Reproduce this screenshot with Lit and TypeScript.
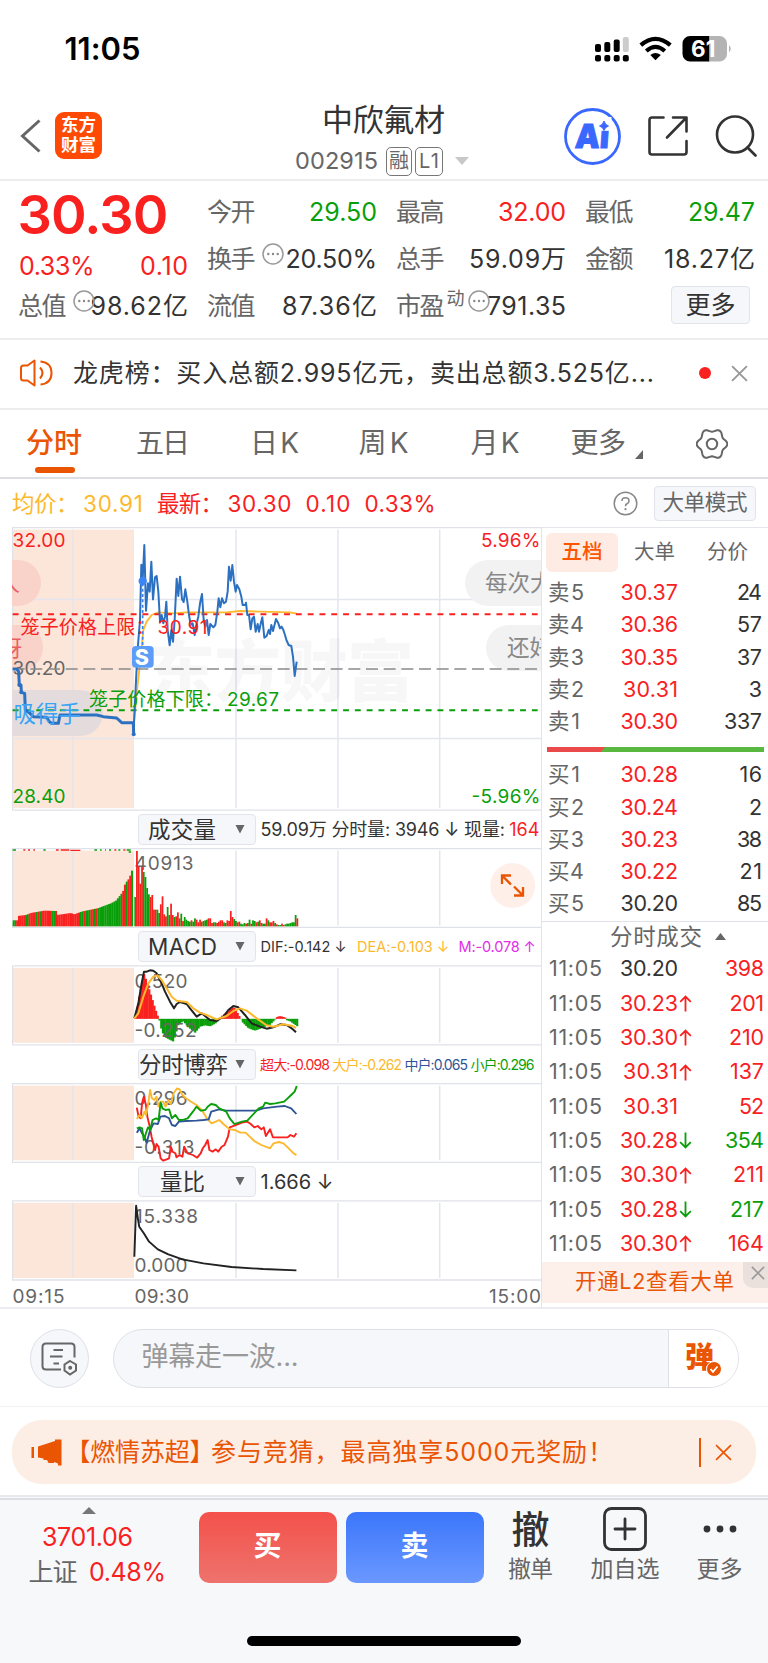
import { LitElement, html, svg, css } from "lit";
import { customElement, property } from "lit/decorators.js";

const RED = "#f8211f";
const GREEN = "#0a9f0a";
const ORANGE = "#ea5504";
const YELLOW = "#fdb92e";
const LINE = "#e4e6ed";

/** A run of text whose tracking is adjusted so that it spans exactly `w` pixels. */
@customElement("fit-text")
class FitText extends LitElement {
  @property({ type: Number }) w = 0;
  static styles = css`
    :host { display: inline-block; white-space: pre; line-height: 1.2; flex: none; }
    .t { display: inline-block; white-space: pre; }
  `;
  render() {
    return html`<span class="t"><slot></slot></span>`;
  }
  firstUpdated() {
    const span = this.renderRoot.querySelector(".t") as HTMLElement;
    const n = Array.from((this.textContent || "").trim()).length;
    const natural = span.getBoundingClientRect().width;
    if (this.w && n > 1) {
      const ls = (this.w - natural) / (n - 1);
      span.style.letterSpacing = ls + "px";
      span.style.marginRight = -ls + "px";
    }
  }
}

const ft = (text: string, w: number, cls = "") => html`<fit-text class=${cls} w=${w}>${text}</fit-text>`;

/** Chart label in page coordinates. */
const label = (x: number, y: number, w: number, text: string, fill = "#666", size = 19) =>
  svg`<text x=${x} y=${y} textLength=${w} font-size=${size} fill=${fill}>${text}</text>`;

const lerp = (pts: number[][], x: number) => {
  for (let i = 1; i < pts.length; i++) {
    if (x <= pts[i][0]) {
      const [a, b] = [pts[i - 1], pts[i]];
      return a[1] + ((b[1] - a[1]) * (x - a[0])) / (b[0] - a[0] || 1);
    }
  }
  return pts[pts.length - 1][1];
};

const AUCTION = "38,447 50,447 56,455 58,495 63,495 64,517 74,520 76,570 90,580 100,590 140,592 148,605 155,610 175,610 180,585 290,585 310,590 350,594 365,608 400,608 401,643";
const PRICE =
  "401,643 402,608 412,400 420,300 424,134 428,180 433,75 438,272 444,190 449,215 454,125 459,238 465,172 470,168 475,215 480,305 485,285 490,310 495,290 499,245 503,330 509,376 514,330 519,365 524,300 530,176 535,228 540,170 546,238 551,246 556,208 562,245 567,285 572,315 578,310 584,345 590,310 595,290 600,250 606,222 611,300 616,320 621,300 626,345 631,312 640,322 646,315 652,275 656,235 661,262 666,235 672,250 678,245 683,215 687,140 692,182 697,135 702,185 707,215 711,195 718,208 724,230 728,255 736,255 738,248 742,285 747,285 752,328 757,295 762,290 767,335 773,312 777,335 782,312 787,292 793,353 800,348 806,330 810,342 814,315 819,333 828,297 835,310 840,325 845,320 850,330 855,345 860,362 866,375 874,378 879,410 884,468 890,425";
const AVERAGE = "402,608 410,520 420,430 430,330 440,305 455,285 475,277 520,280 560,277 680,277 720,273 780,275 870,277 890,281";

const AUCTION_VOL = [[38, 361], [49, 361], [50, 348], [75, 345], [90, 339], [130, 332], [167, 333], [169, 345], [210, 339], [220, 343], [245, 334], [290, 325], [330, 310], [345, 302], [357, 287], [366, 275], [373, 250], [385, 235], [391, 218], [398, 198]];
const AUCTION_COL = "ggrrrrrggrrrrgrgrrrrrrggrrrrrrrrrrrrrrggrgggrrgrggggggggggggggrrgrrgggg";
const VOL = [88, 226, 180, 128, 178, 163, 148, 115, 96, 88, 94, 50, 50, 50, 40, 66, 90, 36, 30, 58, 34, 68, 34, 28, 30, 42, 24, 38, 16, 28, 20, 16, 14, 18, 14, 24, 20, 12, 20, 14, 16, 18, 20, 24, 24, 10, 12, 12, 10, 14, 18, 18, 12, 10, 18, 16, 46, 28, 22, 16, 12, 14, 8, 6, 10, 8, 10, 20, 8, 18, 16, 12, 14, 18, 10, 8, 8, 24, 18, 12, 12, 16, 10, 6, 4, 4, 8, 4, 6, 8, 8, 10, 12, 12, 34, 24];
const VOL_COL = "grrrrggggrrrrggrrrrggrrgrrrgrggggrggrrrgrggrrrggrrrrggrrrrggrrgggrggrggrgrrggrgrrrgrggrrgggggggr";

const HIST = [[404, 656], [410, 630], [420, 570], [432, 522], [440, 545], [455, 592], [465, 625], [476, 656], [478, 662], [485, 695], [495, 712], [520, 725], [526, 705], [535, 672], [550, 664], [562, 680], [585, 698], [600, 680], [615, 676], [630, 679], [650, 668], [655, 656], [665, 648], [685, 632], [700, 620], [712, 638], [722, 656], [728, 668], [745, 685], [765, 692], [790, 682], [810, 674], [824, 660], [828, 652], [838, 648], [855, 652], [858, 660], [870, 664], [893, 680]];
const DIF = "403,655 415,610 425,550 432,515 440,515 450,511 460,512 470,520 485,550 495,575 510,605 522,625 530,612 540,606 560,612 570,625 590,650 605,640 630,660 650,663 670,650 685,630 700,618 715,622 735,645 755,670 780,680 800,686 820,682 840,673 860,675 875,685 888,697";
const DEA = "403,655 415,640 430,590 445,550 460,530 472,526 485,540 500,565 515,590 530,602 560,606 580,625 600,638 620,645 650,658 680,648 700,633 720,625 740,632 770,655 800,676 820,680 850,673 875,677 888,684";

const GAME: [string, string][] = [
  ["#f8211f", "390,203 395,230 401,235 405,190 410,170 416,195 420,230 427,260 432,290 437,310 442,330 446,312 452,320 458,355 465,362 475,358 482,355 487,320 492,335 500,340 503,352 512,345 520,350 525,320 535,340 550,345 562,353 572,340 578,325 585,315 592,300 597,330 606,335 615,328 622,335 632,320 640,315 650,290 655,262 670,256 690,248 705,245 715,252 725,262 735,258 745,268 752,262 758,288 770,268 778,292 820,292 828,285 838,290 845,280"],
  [YELLOW, "390,237 398,225 404,235 412,215 416,225 422,195 428,150 433,175 440,180 446,170 452,200 458,185 465,185 472,200 480,180 487,192 495,160 505,145 512,148 520,165 530,175 545,185 560,195 575,210 590,235 603,250 615,245 625,240 640,255 655,268 670,270 685,278 700,278 712,290 725,303 745,315 770,325 780,310 795,306 808,310 820,322 835,338 845,346"],
  ["#2f5597", "390,278 398,265 405,280 412,292 418,308 428,270 438,250 450,252 457,230 470,228 482,235 490,255 500,258 510,245 530,243 560,242 580,240 595,238 602,215 625,208 645,212 730,212 750,205 790,200 812,198 830,205 845,222"],
  [GREEN, "390,265 398,262 405,265 410,300 416,280 422,262 428,270 435,240 445,235 452,240 458,188 463,205 472,210 482,208 490,235 500,225 510,240 520,240 535,235 550,215 560,200 572,212 585,210 592,200 602,192 615,195 625,205 645,215 655,235 668,252 690,245 705,242 720,225 738,205 750,200 756,188 770,192 785,190 810,185 820,175 830,165 840,155 846,138"],
];

const gearPath = () => {
  let d = "";
  for (let a = 0; a < 360; a += 5) {
    const r = 13.8 + 1.5 * Math.cos((6 * a * Math.PI) / 180);
    const t = (a * Math.PI) / 180;
    d += (a ? "L" : "M") + (16 + r * Math.cos(t)).toFixed(2) + " " + (16 + r * Math.sin(t)).toFixed(2);
  }
  return d + "Z";
};

/** Shaded auction area, frame and vertical grid of one chart, in page coordinates. */
const frame = (top: number, bottom: number) => svg`
  <rect x="12" y=${top + 2.6} width="122" height=${bottom - top - 4.6} fill="#fce6da"/>
  <path d=${`M12 ${top + 0.7}H541M12 ${bottom}H541M12.5 ${top}V${bottom}`} stroke="#dfe2e9" stroke-width="1.3" fill="none"/>
  <path d=${[73, 236, 338, 439.7].map((x) => `M${x} ${top + 2.5}V${bottom - 2}`).join("")} stroke=${LINE} stroke-width="1.5" fill="none"/>`;

@customElement("app-root")
class AppRoot extends LitElement {
  static styles = css`
    :host { display: block; width: 768px; height: 1663px; overflow: hidden; background: #fff; color: #333;
      font-family: Inter, "Noto Sans CJK SC", sans-serif; font-size: 25px; line-height: 1.2; }
    * { box-sizing: border-box; }
    svg { display: block; flex: none; }
    svg text { white-space: pre; }
    .red { color: #f8211f; } .green { color: #0a9f0a; } .grey { color: #666; } .dark { color: #333; }
    .orange { color: #ea5504; } .yellow { color: #fdb92e; } .magenta { color: #e22ce8; } .blue { color: #2f5597; }
    .status { height: 98px; display: flex; justify-content: space-between; padding: 0 35px 0 64.5px; align-items: center; }
    .clock { font-size: 31px; font-weight: 600; color: #000; }
    .nav { height: 83px; display: grid; grid-template-columns: 295px 1fr 209px; border-bottom: 2px solid #ededed; }
    .nav-left { display: flex; align-items: center; gap: 14px; padding: 0 0 6px 20px; }
    .logo { width: 47px; height: 47px; border-radius: 9px; background: #ff4a05; color: #fff; font-size: 17.5px; font-weight: 700;
      line-height: 20px; text-align: center; padding-top: 3px; }
    .nav-mid { display: flex; flex-direction: column; }
    .name { padding-left: 27px; font-size: 31px; height: 45px; padding-top: 3px; }
    .code { display: flex; align-items: center; height: 36px; font-size: 23.5px; color: #666; }
    .badge { border: 1.5px solid #777; border-radius: 5px; height: 29px; font-size: 20px; display: flex; align-items: center; justify-content: center; }
    .b1 { width: 26px; margin-left: 8px; } .b2 { width: 28px; margin-left: 3px; }
    .caret { margin-left: 12px; }
    .nav-right { display: flex; align-items: center; padding: 0 0 5px 5px; gap: 27px; }
    .quote { height: 159px; border-bottom: 2px solid #ededed; display: grid; grid-template-columns: 169px 169px 169px 169px;
      column-gap: 20px; padding: 7.6px 12px 0 19px; }
    .col { display: flex; flex-direction: column; }
    .cell { height: 47px; display: flex; align-items: center; justify-content: space-between; position: relative; }
    .lbl { display: flex; align-items: center; color: #666; margin-left: -1px; }
    .price { font-size: 54px; font-weight: 600; height: 54px; line-height: 54px; display: flex; align-items: center; margin-left: -1.5px; }
    .chg { height: 40px; display: flex; justify-content: space-between; align-items: center; padding-top: 7px; }
    .dots { position: absolute; top: 7.5px; left: 54px; }
    .pe .dots { left: 70.5px; }
    .sup { font-size: 18px; line-height: 22px; margin: -15px 0 0 2px; }
    .more { margin-left: auto; width: 79px; height: 38px; border: 1.5px solid #e1e4ea; border-radius: 4px; background: #f6f7fa;
      display: flex; align-items: center; justify-content: center; margin: -2px 5px 0 auto; padding-bottom: 1px; }
    .notice { height: 70px; border-bottom: 2px solid #ededed; display: flex; align-items: center; padding-left: 20px; padding-bottom: 2px; }
    .notice fit-text { margin-left: 20px; width: 600px; }
    .notice .x { margin-left: 20px; }
    .dot { width: 12px; height: 12px; border-radius: 50%; background: #f8211f; margin-left: 26px; }
    .tabs { height: 69px; border-bottom: 2px solid #dcdee3; display: flex; font-size: 28px; color: #666; align-items: center; padding-left: 26px; }
    .tab { display: flex; align-items: center; height: 67px; position: relative; padding-top: 1px; }
    .tab.on { color: #ea5504; font-weight: 500; }
    .tab.on::after { content: ""; position: absolute; left: 9px; bottom: 4px; width: 40px; height: 6px; border-radius: 3px; background: #ea5504; }
    .t2 { margin-left: 54px; } .t3 { margin-left: 60px; } .t4 { margin-left: 59.5px; } .t5 { margin-left: 62px; } .t6 { margin-left: 51px; } .t7 { margin-left: 53px; }
    .tri { align-self: flex-end; margin: 0 0 18px 9px; }
    .bar { height: 48px; display: flex; align-items: center; padding: 0 12px; font-size: 22.5px; }
    .bar .gap { flex: 1; } .bar .s { width: 4.5px; } .bar .m { width: 14px; }
    .mode { margin-left: 16px; width: 102px; height: 35px; border: 1.5px solid #e1e4ea; border-radius: 4px; background: #f6f7fa;
      color: #666; font-size: 21.5px; display: flex; align-items: center; justify-content: center; }
    .main { height: 782px; display: grid; grid-template-columns: 530px 1fr; padding-left: 12px; border-bottom: 2px solid #ececf0; }
    .charts { border-right: 1.5px solid #e1e4ea; display: flex; flex-direction: column; }
    .head { display: flex; align-items: center; padding-left: 126px; }
    .sel { width: 118px; height: 31px; border: 1.5px solid #e1e4ea; border-radius: 4px; background: #f6f7fa; display: flex;
      align-items: center; justify-content: space-between; padding: 0 10px 0 9px; font-size: 22.5px; margin-right: 5px; }
    .sel.c { padding-left: 21px; } .sel.w { padding-left: 0; }
    .h1 { height: 37px; font-size: 18px; } .h2 { height: 37px; font-size: 14.5px; } .h3 { height: 37px; font-size: 14px; gap: 3px; } .h4 { height: 37px; font-size: 20px; }
    .head > fit-text { margin-left: -0.5px; padding-top: 1px; }
    .h2 > .yellow { margin-left: 10.5px; } .h2 > .magenta { margin-left: 9.5px; } .h3 .sel { margin-right: 1.5px; }
    .axis { display: flex; color: #666; font-size: 19px; height: 27px; align-items: center; padding: 6px 0 0 0.5px; justify-content: space-between; }
    .axis .mid { margin-right: 230px; }
    .side { display: flex; flex-direction: column; font-size: 21.5px; border-top: 1px solid #e4e6ec; }
    .stabs { margin-top: 5px; height: 39px; display: flex; padding-left: 4px; font-size: 20.5px; color: #666; }
    .stab { width: 73px; display: flex; align-items: center; justify-content: center; border-radius: 6px; }
    .stab.on { background: #feece4; color: #ff5500; font-weight: 500; width: 72px; }
    .rows { padding-top: 5px; }
    .row { height: 32.25px; display: grid; grid-template-columns: 38px 92px 84px; align-items: center; margin-left: 6px; }
    .row .p, .row .v { text-align: right; }
    .ratio { height: 5px; margin: 9px 5px 7px; display: flex; background: #58b840; }
    .ratio svg { height: 5px; }
    .tick-head { border-top: 1.5px solid #dfe2e9; height: 31.5px; display: flex; align-items: center; color: #666; font-size: 22.5px; gap: 13px; padding-left: 68px; }
    .tick { height: 34.35px; display: grid; grid-template-columns: 55px 74px 16px 75px; align-items: center; margin-left: 7px; }
    .tick .p { text-align: right; } .tick .v { text-align: right; padding-right: 5px; }
    .arrow { margin-left: 1px; }
    .l2 { height: 41px; background: #fdf0ea; color: #ea5504; display: flex; align-items: center; padding-left: 33px; font-size: 21.5px; position: relative; padding-bottom: 2px; margin-top: 1px; }
    .l2 .close { position: absolute; right: 0; top: 0; width: 26px; height: 26px; background: #eae0dc; border-bottom-left-radius: 10px; display: flex; align-items: center; justify-content: center; padding-left: 3px; padding-bottom: 5px; }
    .danmu { height: 98px; border-bottom: 1.5px solid #f1f1f3; display: flex; align-items: center; padding: 2px 0 0 29.5px; }
    .round { width: 59px; height: 59px; border-radius: 50%; background: #f6f7fa; border: 1.5px solid #dde0e7; display: flex; align-items: center; justify-content: center; }
    .input { margin-left: 24px; width: 626px; height: 59px; border-radius: 30px; background: #f6f7fa; border: 1.5px solid #dde0e7; display: flex; overflow: hidden; }
    .ph { flex: 1; color: #999; font-size: 27px; padding: 10.5px 0 0 28px; }
    .send { width: 70px; background: #fff; border-left: 1.5px solid #dde0e7; display: flex; align-items: center; justify-content: center; position: relative; color: #ea5504; font-size: 29px; font-weight: 800; padding: 0 7px 0 0; }
    .check { position: absolute; left: 37px; top: 31px; }
    .promo { margin: 13px 12px 11px; height: 64px; border-radius: 30px; background: #fdeee5; color: #ea5504; display: flex; align-items: center; padding-left: 19px; }
    .promo .tag { margin-left: 16px; font-feature-settings: "halt" 1; }
    .promo .msg { margin-left: 9px; width: 400px; }
    .vline { width: 1.5px; height: 29px; background: #ea5504; margin: 0 14.5px 0 auto; }
    .promo .x { margin-right: 24px; }
    .foot { border-top: 2px solid #e8e9ed; height: 168px; background: #f7f8fa; display: flex; flex-direction: column; }
    .foot-row { border-top: 2px solid #dcdfe4; margin-top: 1px; height: 86px; display: flex; padding-left: 28.5px; }
    .index { width: 170px; display: flex; flex-direction: column; }
    .index svg { margin: 7px 0 0 53px; }
    .index .n { margin: 8px 0 0 13.5px; } .index .s { display: flex; margin-top: 5px; gap: 11.5px; }
    .btn { width: 138px; height: 71px; border-radius: 10px; margin-top: 11.5px; color: #fff; font-size: 28px; font-weight: 700; display: flex; align-items: center; justify-content: center; }
    .buy { background: linear-gradient(#f4514b, #ee736d); margin-right: 9px; } .sell { background: linear-gradient(#3b76fb, #6b98ff); }
    .act { display: flex; flex-direction: column; align-items: center; color: #666; font-size: 23px; }
    .act .ic { height: 59px; padding-top: 2px; display: flex; align-items: center; justify-content: center; color: #333; }
    .a1 { margin-left: 24.5px; width: 45px; } .a2 { width: 70px; margin-left: 37px; } .a3 { width: 46px; margin-left: 36.5px; }
    .big { font-size: 38px; font-weight: 500; line-height: 40px; }
    .home { width: 274px; height: 10px; border-radius: 5px; background: #000; margin: 52px auto 0 247px; }
  `;

  private dots() {
    return html`<svg class="dots" width="22" height="22" viewBox="0 0 22 22"><circle cx="11" cy="11" r="10" fill="none" stroke="#999" stroke-width="1.5"/><g fill="#888"><circle cx="6.3" cy="11" r="1.2"/><circle cx="11" cy="11" r="1.2"/><circle cx="15.7" cy="11" r="1.2"/></g></svg>`;
  }
  private down() {
    return html`<svg width="10" height="9" viewBox="0 0 10 9"><path d="M0.5 0H9.5L5 8.5Z" fill="#666"/></svg>`;
  }
  private cross(size: number, color: string, sw = 2) {
    return html`<svg class="x" width=${size} height=${size} viewBox="0 0 16 16"><path d="M1 1L15 15M15 1L1 15" stroke=${color} stroke-width=${sw}/></svg>`;
  }
  private cell(l: string, v: string, w: number, cls = "dark", dots = false) {
    return html`<div class="cell"><div class="lbl">${ft(l, 48.5)}</div>${dots ? this.dots() : ""}${ft(v, w, cls)}</div>`;
  }

  private priceChart() {
    return html`<svg width="529" height="284" viewBox="12 527 529 284">
      ${frame(527, 810.2)}
      <path d="M12 599.5H541M12 738.5H541" stroke=${LINE} stroke-width="1.3"/>
      <text x="148" y="696" font-size="67" font-weight="900" fill="#000" fill-opacity="0.03" textLength="266">东方财富</text>
      <rect x="-30" y="560" width="71" height="46" rx="23" fill="#f9d3ca"/><text x="-2" y="591" font-size="22" fill="#e96060">人</text>
      <rect x="-30" y="625" width="73" height="45" rx="22" fill="#f9d3ca"/><text x="0" y="656" font-size="22" fill="#e96060">呀</text>
      <rect x="-30" y="690" width="133" height="46" rx="23" fill="#e4dcdc"/>
      <rect x="465" y="560" width="120" height="46" rx="23" fill="#f2f2f2"/><text x="485" y="591" font-size="22.5" fill="#888">每次大</text>
      <rect x="486" y="625" width="120" height="46" rx="23" fill="#f2f2f2"/><text x="507" y="656" font-size="22.5" fill="#888">还好</text>
      ${label(12.5, 546.7, 53, "32.00", RED)} ${label(481, 546.7, 59.5, "5.96%", RED)}
      ${label(12.5, 802.7, 53, "28.40", GREEN)} ${label(471.5, 802.7, 69, "-5.96%", GREEN)}
      ${label(12.5, 675, 53, "30.20", "#666")}
      <g transform="translate(0 520) scale(0.33333)" fill="none" stroke-linejoin="round">
        <polyline points=${AVERAGE} stroke=${YELLOW} stroke-width="5.500"/>
        <path d="M38 282.500H1613" stroke=${RED} stroke-width="6" stroke-dasharray="17.700 17.700"/>
        <path d="M38 447H1613" stroke="#8a8a8a" stroke-width="5" stroke-dasharray="36 17"/>
        <path d="M38 570.500H1613" stroke=${GREEN} stroke-width="6" stroke-dasharray="17.700 17.700"/>
        <path d="M428 190V380" stroke="#3b82f0" stroke-width="5" stroke-dasharray="9 7"/>
        <polyline points=${AUCTION} stroke="#2c70c2" stroke-width="9"/>
        <polyline points=${PRICE} stroke="#2c70c2" stroke-width="6"/>
        <circle cx="401" cy="643" r="6" fill="#2c70c2"/><circle cx="58" cy="495" r="6" fill="#2c70c2"/><circle cx="64" cy="517" r="6" fill="#2c70c2"/>
        <circle cx="428" cy="183" r="12.500" fill="#3d84f7"/>
        <rect x="396" y="378" width="65" height="65" rx="12" fill="#5b9df8"/>
      </g>
      <text x="134.800" y="664.500" font-size="21.500" font-weight="800" fill="#fff">S</text>
      <text x="13.500" y="721.500" font-size="22.500" fill="#3ba3f5">吸得手</text>
      ${label(20.500, 634, 134, "笼子价格上限：", RED)} ${label(157.5, 633.5, 50, "30.91", RED)}
      ${label(89, 706.300, 134, "笼子价格下限：", GREEN)} ${label(227, 706, 52, "29.67", GREEN)}
    </svg>`;
  }
  private volumeChart() {
    const auction = [];
    for (let i = 0; i * 5.3 < 358; i++) {
      const x = 38 + i * 5.3;
      const y = lerp(AUCTION_VOL, x);
      auction.push(svg`<rect x=${x} y=${y} width="6" height=${379 - y} fill=${AUCTION_COL[i] === "g" ? GREEN : RED}/>`);
    }
    return html`<svg width="529" height="80" viewBox="12 848 529 80">
      ${frame(848, 927.4)}
      ${label(134.5, 870, 59, "40913")}
      <g transform="translate(0 800) scale(0.33333)">
        ${auction}
        ${VOL.map((h, i) => svg`<rect x=${403 + i * 5.12} y=${379 - h} width="5.3" height=${h} fill=${VOL_COL[i] === "g" ? GREEN : RED}/>`)}
        <path d="M38 150h10M130 150h7M283 150h8M300 150h5M315 150h3M327 150h6M355 150h6M380 150h12M386 156h7" stroke=${GREEN} stroke-width="4"/>
        <path d="M70 150h6M84 150h6M100 150h5M168 150h8M182 150h26M211 151h30M343 150h6M370 150h6" stroke=${RED} stroke-width="4"/>
      </g>
      <circle cx="512.700" cy="885.500" r="22.500" fill="#fef0e9"/>
      <path d="M502 884V875.500H511M502.500 876L511 884.500M523 887V895.500H514M522.500 895L514 886.500" stroke=${ORANGE} stroke-width="2.300" fill="none"/>
    </svg>`;
  }
  private macdChart() {
    const bars = [];
    for (let x = 404; x < 893; x += 5.1) {
      const y = lerp(HIST, x + 2.5);
      bars.push(svg`<rect x=${x} y=${Math.min(y, 656.5)} width="6.4" height=${Math.abs(y - 656.5)} fill=${y < 656.5 ? RED : GREEN}/>`);
    }
    return html`<svg width="529" height="81" viewBox="12 965 529 81">
      ${frame(965.2, 1044.8)}
      ${label(134.5, 987.7, 53, "0.520")}
      <g transform="translate(0 800) scale(0.33333)" fill="none" stroke-linejoin="round">
        ${bars}
        <polyline points=${DIF} stroke="#222" stroke-width="6"/>
        <polyline points=${DEA} stroke=${YELLOW} stroke-width="6"/>
      </g>
      ${label(134.5, 1037, 62, "-0.252")}
    </svg>`;
  }
  private gameChart() {
    return html`<svg width="529" height="80" viewBox="12 1083 529 80">
      ${frame(1083, 1162.3)}
      ${label(134.5, 1105, 53, "0.296")} ${label(134.5, 1154, 60, "-0.313")}
      <g transform="translate(0 1040) scale(0.35077 0.33333)" fill="none" stroke-width="5.5" stroke-linejoin="round">
        ${GAME.map(([c, p]) => svg`<polyline points=${p} stroke=${c}/>`)}
      </g>
    </svg>`;
  }
  private ratioChart() {
    return html`<svg width="529" height="81" viewBox="12 1200 529 81">
      ${frame(1200.2, 1280)}
      ${label(135, 1222.7, 63, "15.338")} ${label(134.5, 1272, 53, "0.000")}
      <g transform="translate(0 1040) scale(0.35077 0.33333)" fill="none">
        <polyline points="383,650 388,497 393,535 397,560 410,580 425,605 450,628 480,643 520,658 580,670 660,681 750,687 845,691" stroke="#222" stroke-width="5.500" stroke-linejoin="round"/>
      </g>
    </svg>`;
  }

  private level(l: string, n: string, p: string, v: string, cls = "red") {
    return html`<div class="row"><span class="grey">${ft(l + " " + n, n === "1" ? 32 : 36)}</span>
      <span class="p">${ft(p, p === "30.31" ? 55 : 57.5, cls)}</span>
      <span class="v">${ft(v, v.length === 3 ? 38 : v.length === 2 ? (v[1] === "1" || v[0] === "1" ? 22.5 : 25) : 12, "dark")}</span></div>`;
  }
  private tick(p: string, arrow: string, v: string, w: number, pc = "red", vc = "red") {
    const up = "M6 15.500V1.500M1 6.500L6 1.500L11 6.500";
    const dn = "M6 0.500V14.500M1 9.500L6 14.500L11 9.500";
    return html`<div class="tick"><span class="grey">${ft("11:05", 53)}</span>
      <span class="p">${ft(p, p === "30.31" ? 55 : 58, pc)}</span>
      <span>${arrow ? html`<svg class="arrow" width="13" height="17" viewBox="0 0 12 16"><path d=${arrow === "u" ? up : dn} fill="none" stroke=${arrow === "u" ? RED : GREEN} stroke-width="1.700"/></svg>` : ""}</span>
      <span class="v">${ft(v, w, vc)}</span></div>`;
  }

  render() {
    return html`
      <div class="status">
        ${ft("11:05", 76, "clock")}
        <svg width="138" height="28" viewBox="595 35 138 28">
          <g fill="#000"><rect x="595" y="44" width="6" height="8" rx="2"/><rect x="604.300" y="42" width="6" height="10" rx="2"/><rect x="613.700" y="39.500" width="6" height="12.500" rx="2"/><rect x="622.800" y="37" width="6" height="15" rx="2" fill="#ccc"/>
          <rect x="595" y="55" width="6" height="6.500" rx="2"/><rect x="604.300" y="55" width="6" height="6.500" rx="2"/><rect x="613.700" y="55" width="6" height="6.500" rx="2"/><rect x="622.800" y="55" width="6" height="6.500" rx="2"/></g>
          <g fill="none" stroke="#000" stroke-width="4.200"><path d="M640.800 45.200Q655.500 32.500 670.300 45.200"/><path d="M646.300 51Q655.500 42.800 664.800 51"/></g>
          <path d="M650.300 55Q655.500 51 660.800 55L655.500 60.300Z" fill="#000"/>
          <path d="M690 36h19.500v25.500H690a7.500 7.500 0 0 1-7.500-7.500V43.500a7.500 7.500 0 0 1 7.500-7.500z" fill="#000"/>
          <path d="M709.500 36H719.500a7.500 7.500 0 0 1 7.500 7.500v10.500a7.500 7.500 0 0 1-7.500 7.500H709.500z" fill="#b4b4b4"/>
          <path d="M729 45Q732.500 48.700 729 52.500Z" fill="#b4b4b4"/>
          <text x="691" y="56.500" font-size="22.500" font-weight="700" fill="#fff" textLength="24.500">61</text>
        </svg>
      </div>
      <div class="nav">
        <div class="nav-left">
          <svg width="21" height="34" viewBox="0 0 21 34"><path d="M19.500 1.500L2.500 17L19.500 32.500" fill="none" stroke="#666" stroke-width="3"/></svg>
          <div class="logo">东方<br/>财富</div>
        </div>
        <div class="nav-mid">
          <div class="name">${ft("中欣氟材", 123)}</div>
          <div class="code">${ft("002915", 83)}<span class="badge b1">融</span><span class="badge b2">${ft("L1", 20)}</span>
            <svg class="caret" width="14" height="8" viewBox="0 0 14 8"><path d="M0 0H14L7 8Z" fill="#c8c8c8"/></svg></div>
        </div>
        <div class="nav-right">
          <svg width="57" height="57" viewBox="0 0 57 57"><circle cx="28.500" cy="28.500" r="27" fill="none" stroke="#3a68ff" stroke-width="2.800"/>
            <text transform="translate(10.500 39.500) skewX(-4)" font-size="33" font-weight="900" textLength="34" lengthAdjust="spacingAndGlyphs" fill="#3a68ff" stroke="#3a68ff" stroke-width="1">Ai</text>
            <rect x="34.500" y="9" width="13" height="13.800" fill="#fff"/>
            <path d="M40 13Q41 17 44.500 18Q41 19 40 22.500Q39 19 35.500 18Q39 17 40 13Z" fill="#3a68ff" stroke="#3a68ff"/></svg>
          <svg width="40" height="40" viewBox="0 0 40 40"><path d="M15.500 1.500H4Q1.500 1.500 1.500 4V36Q1.500 38.500 4 38.500H36Q38.500 38.500 38.500 36V25M25 1.500H38.500V15.500M38 2L19 21.500" fill="none" stroke="#333" stroke-width="2.600" stroke-linecap="round" stroke-linejoin="round"/></svg>
          <svg width="42" height="42" viewBox="0 0 42 42"><circle cx="20" cy="19.500" r="18" fill="none" stroke="#333" stroke-width="2.600"/><path d="M32.500 32.500L40.500 40.500" stroke="#333" stroke-width="2.600" stroke-linecap="round"/></svg>
        </div>
      </div>
      <div class="quote">
        <div class="col">
          <div class="price">${ft("30.30", 151, "red")}</div>
          <div class="chg">${ft("0.33%", 75.5, "red")}${ft("0.10", 48, "red")}</div>
          ${this.cell("总值", "98.62亿", 97.5, "dark", true)}
        </div>
        <div class="col">${this.cell("今开", "29.50", 68, "green")}${this.cell("换手", "20.50%", 91.5, "dark", true)}${this.cell("流值", "87.36亿", 95)}</div>
        <div class="col">${this.cell("最高", "32.00", 68, "red")}${this.cell("总手", "59.09万", 97)}
          <div class="cell pe"><div class="lbl">${ft("市盈", 48.5)}<span class="sup grey">动</span></div>${this.dots()}${ft("791.35", 79, "dark")}</div></div>
        <div class="col">${this.cell("最低", "29.47", 67, "green")}${this.cell("金额", "18.27亿", 91)}<div class="cell"><div class="more">更多</div></div></div>
      </div>
      <div class="notice">
        <svg width="33" height="28" viewBox="0 0 33 28" fill="none" stroke=${ORANGE} stroke-width="2" stroke-linejoin="round"><path d="M14.500 1.500V26.500L7.500 21.500H3.500Q1 21.500 1 19V9Q1 6.500 3.500 6.500H7.500Z"/><path d="M20 8.500Q25 14 20 19.500M20.500 2.500Q31.500 3.500 31.500 14T20.500 25.500"/></svg>
        ${ft("龙虎榜：买入总额2.995亿元，卖出总额3.525亿...", 581)}
        <span class="dot"></span>${this.cross(17, "#999", 1.8)}
      </div>
      <div class="tabs">
        <div class="tab on">${ft("分时", 56)}</div>
        <div class="tab t2">${ft("五日", 54)}</div>
        <div class="tab t3">${ft("日 K", 49)}</div>
        <div class="tab t4">${ft("周 K", 50)}</div>
        <div class="tab t5">${ft("月 K", 49)}</div>
        <div class="tab t6">${ft("更多", 55.5)}<svg class="tri" width="8" height="9" viewBox="0 0 8 9"><path d="M8 0V9H0Z" fill="#666"/></svg></div>
        <div class="tab t7"><svg width="32" height="32" viewBox="0 0 32 32" fill="none" stroke="#666" stroke-width="2"><path d=${gearPath()}/><circle cx="16" cy="16" r="5.200"/></svg></div>
      </div>
      <div class="bar">
        ${ft("均价：", 66.5, "yellow")}<span class="s"></span>${ft("30.91", 60, "yellow")}<span class="m"></span>
        ${ft("最新：", 66, "red")}<span class="s"></span>${ft("30.30", 64, "red")}<span class="m"></span>${ft("0.10", 45, "red")}<span class="m"></span>${ft("0.33%", 71, "red")}
        <span class="gap"></span>
        <svg width="25" height="25" viewBox="0 0 25 25"><circle cx="12.500" cy="12.500" r="11.300" fill="none" stroke="#888" stroke-width="1.500"/><path d="M9 10Q9 6.800 12.500 6.800T16 10Q16 11.800 14 12.800Q12.500 13.600 12.500 15.300" fill="none" stroke="#888" stroke-width="1.600"/><circle cx="12.500" cy="18.200" r="1.100" fill="#888"/></svg>
        <div class="mode">${ft("大单模式", 85)}</div>
      </div>
      <div class="main">
        <div class="charts">
          ${this.priceChart()}
          <div class="head h1"><div class="sel"><span>${ft("成交量", 68)}</span>${this.down()}</div>${ft("59.09万 分时量: 3946 ↓ 现量: ", 249.5)}${ft("164", 30, "red")}</div>
          ${this.volumeChart()}
          <div class="head h2"><div class="sel"><span>${ft("MACD", 69)}</span>${this.down()}</div>${ft("DIF:-0.142 ↓", 86, "dark")}${ft("DEA:-0.103 ↓", 92, "yellow")}${ft("M:-0.078 ↑", 77, "magenta")}</div>
          ${this.macdChart()}
          <div class="head h3"><div class="sel w"><span>${ft("分时博弈", 89)}</span>${this.down()}</div>${ft("超大:-0.098", 70, "red")}${ft("大户:-0.262", 69.5, "yellow")}${ft("中户:0.065", 63.5, "blue")}${ft("小户:0.296", 64, "green")}</div>
          ${this.gameChart()}
          <div class="head h4"><div class="sel c"><span>${ft("量比", 45)}</span>${this.down()}</div>${ft("1.666 ↓", 73)}</div>
          ${this.ratioChart()}
          <div class="axis">${ft("09:15", 52)}${ft("09:30", 54.5, "mid")}${ft("15:00", 52)}</div>
        </div>
        <div class="side">
          <div class="stabs"><div class="stab on">五档</div><div class="stab">大单</div><div class="stab">分价</div></div>
          <div class="rows">
            ${this.level("卖", "5", "30.37", "24")}${this.level("卖", "4", "30.36", "57")}${this.level("卖", "3", "30.35", "37")}${this.level("卖", "2", "30.31", "3")}${this.level("卖", "1", "30.30", "337")}
          </div>
          <div class="ratio"><svg width="58" height="5" viewBox="0 0 58 5"><path d="M0 0H58L54 5H0Z" fill="#eb4a4a"/></svg></div>
          <div>
            ${this.level("买", "1", "30.28", "16")}${this.level("买", "2", "30.24", "2")}${this.level("买", "3", "30.23", "38")}${this.level("买", "4", "30.22", "21")}${this.level("买", "5", "30.20", "85", "dark")}
          </div>
          <div class="tick-head">${ft("分时成交", 92)}<svg width="11" height="7" viewBox="0 0 11 7"><path d="M0 7H11L5.500 0Z" fill="#666"/></svg></div>
          ${this.tick("30.20", "", "398", 39, "dark")}
          ${this.tick("30.23", "u", "201", 34.5)}
          ${this.tick("30.30", "u", "210", 35)}
          ${this.tick("30.31", "u", "137", 34)}
          ${this.tick("30.31", "", "52", 25)}
          ${this.tick("30.28", "d", "354", 39, "red", "green")}
          ${this.tick("30.30", "u", "211", 31)}
          ${this.tick("30.28", "d", "217", 34, "red", "green")}
          ${this.tick("30.30", "u", "164", 36)}
          <div class="l2">${ft("开通L2查看大单", 159)}<div class="close">${this.cross(14, "#999", 1.8)}</div></div>
        </div>
      </div>
      <div class="danmu">
        <div class="round"><svg width="37" height="34" viewBox="0 0 37 34" fill="none" stroke="#666" stroke-width="2"><path d="M20 27.500H5Q1.500 27.500 1.500 24V5Q1.500 1.500 5 1.500H30Q33.500 1.500 33.500 5V15.500M12.500 8H22M9 14.500H21.500M12.500 21.500H18"/><path d="M29 19L35 22.500V28.500L29 32.500L23.500 28.500V22.500Z"/><circle cx="29.200" cy="25.700" r="1" fill="#666"/></svg></div>
        <div class="input"><div class="ph">${ft("弹幕走一波...", 157)}</div><div class="send">弹<svg class="check" width="16" height="16" viewBox="0 0 16 16"><circle cx="8" cy="8" r="7.500" fill=${ORANGE} stroke="#fff"/><path d="M4.500 8L7 10.800L11.500 5.500" fill="none" stroke="#fff" stroke-width="1.800"/></svg></div></div>
      </div>
      <div class="promo">
        <svg width="31" height="27" viewBox="0 0 31 27" fill=${ORANGE}><rect x="0.500" y="8" width="2.500" height="11"/><path d="M7 7.500L24 2V0.500H30.500V26.500H27V24.500L23 23V24H17.500L16 21H12.500V19.500L7 18.500Z"/></svg>
        ${ft("【燃情苏超】", 124, "tag")}${ft("参与竞猜，最高独享5000元奖励！", 402, "msg")}
        <div class="vline"></div>${this.cross(17, ORANGE, 1.6)}
      </div>
      <div class="foot">
        <div class="foot-row">
          <div class="index"><svg width="14" height="7" viewBox="0 0 14 7"><path d="M0 7H14L7 0Z" fill="#777"/></svg>
            ${ft("3701.06", 91, "red n")}<div class="s">${ft("上证", 49, "grey")}${ft("0.48%", 77, "red")}</div></div>
          <div class="btn buy">买</div><div class="btn sell">卖</div>
          <div class="act a1"><div class="ic big">撤</div>${ft("撤单", 45)}</div>
          <div class="act a2"><div class="ic"><svg width="44" height="44" viewBox="0 0 44 44" fill="none" stroke="#333" stroke-width="2.800"><rect x="1.500" y="1.500" width="41" height="41" rx="7"/><path d="M12 22H32M22 12V32" stroke-linecap="round"/></svg></div>${ft("加自选", 69)}</div>
          <div class="act a3"><div class="ic"><svg width="34" height="8" viewBox="0 0 34 8" fill="#333"><circle cx="4" cy="4" r="3.400"/><circle cx="17" cy="4" r="3.400"/><circle cx="30" cy="4" r="3.400"/></svg></div>${ft("更多", 46)}</div>
        </div>
        <div class="home"></div>
      </div>
    `;
  }
}
